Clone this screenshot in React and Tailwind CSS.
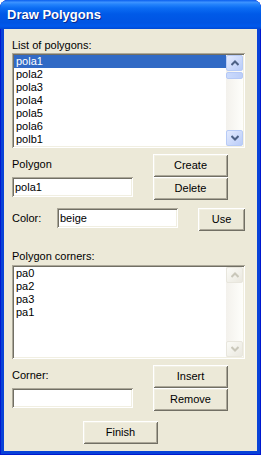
import React from 'react'

const font = { fontFamily: '"Liberation Sans", Arial, sans-serif' }
const sunken = 'shadow-[inset_1px_1px_#ACA899,inset_-1px_-1px_#FFFFFF,inset_2px_2px_#716F64,inset_-2px_-2px_#F1EFE2]'
const raised = 'shadow-[inset_1px_1px_#FFFFFF,inset_-1px_-1px_#716F64,inset_2px_2px_#F1EFE2,inset_-2px_-2px_#ACA899]'

function Button({ children, className = '' }) {
  return (
    <div className={`flex items-center justify-center bg-[#ECE9D8] text-[11px] text-black ${raised} ${className}`}>
      {children}
    </div>
  )
}

function TextBox({ value, className = '' }) {
  return (
    <div className={`flex items-center bg-white pl-[3px] text-[11px] leading-[13px] text-black ${sunken} ${className}`}>
      {value}
    </div>
  )
}

function Arrow({ up, disabled }) {
  const color = disabled ? '#C9C7BA' : '#4D6185'
  return (
    <div
      className={`h-[16px] w-[17px] rounded-[2px] border flex items-center justify-center ${
        disabled
          ? 'border-[#E8E6DD] bg-[linear-gradient(135deg,#FBFBF7,#EAE8DF)]'
          : 'border-[#B7CBF6] bg-[linear-gradient(135deg,#E4EBFE,#B9CCF8)]'
      }`}
    >
      <svg width="8" height="6" viewBox="0 0 8 6">
        <path
          d={up ? 'M0.5 5 L4 1.5 L7.5 5' : 'M0.5 1 L4 4.5 L7.5 1'}
          fill="none"
          stroke={color}
          strokeWidth="2"
        />
      </svg>
    </div>
  )
}

function ScrollBar({ disabled, thumb }) {
  return (
    <div className="flex w-[17px] flex-col bg-[linear-gradient(to_right,#F3F1EC,#FEFEFB)]">
      <Arrow up disabled={disabled} />
      <div className="flex-1">
        {thumb && (
          <div className="mt-[1px] h-[7px] rounded-[2px] border border-[#B4C8F6] bg-[linear-gradient(to_right,#CADAFC,#BCCEF8)]" />
        )}
      </div>
      <Arrow disabled={disabled} />
    </div>
  )
}

function ListBox({ items, selected, disabled, thumb, className = '' }) {
  return (
    <div className={`flex bg-white p-[2px] ${sunken} ${className}`}>
      <div className="flex-1">
        {items.map((it, i) => (
          <div
            key={it}
            className={`h-[13px] pl-[2px] text-[11px] leading-[13px] ${
              i === selected ? 'bg-[#316AC5] text-white' : 'text-black'
            }`}
          >
            {it}
          </div>
        ))}
      </div>
      <ScrollBar disabled={disabled} thumb={thumb} />
    </div>
  )
}

function Label({ children, className = '' }) {
  return <div className={`h-[13px] text-[11px] leading-[13px] text-black ${className}`}>{children}</div>
}

export default function App() {
  return (
    <div style={font} className="h-[455px] w-[261px] bg-white">
      <div className="flex h-full flex-col rounded-t-[8px] bg-[#0842D8] shadow-[inset_1px_0_#0019CF,inset_-1px_0_#0019CF,inset_0_-1px_#0019CF]">
        <div className="flex h-[29px] items-center rounded-t-[8px] bg-[linear-gradient(180deg,#0A5EEE_0%,#3D93FF_8%,#2483FB_15%,#0B6CF3_28%,#005AE8_48%,#0054E3_78%,#0059EC_90%,#0048D4_100%)] pl-[7px]">
          <span className="text-[13px] font-bold text-white [text-shadow:1px_1px_#0B2A8F]">Draw Polygons</span>
        </div>
        <div className="mx-[4px] mb-[4px] flex flex-1 flex-col bg-[#ECE9D8] pl-[8px]">
          <Label className="mt-[10px]">List of polygons:</Label>
          <ListBox
            className="mt-[1px] h-[95px] w-[233px]"
            items={['pola1', 'pola2', 'pola3', 'pola4', 'pola5', 'pola6', 'polb1']}
            selected={0}
            thumb
          />

          <div className="mt-[6px] flex gap-[20px]">
            <div className="flex w-[121px] flex-col">
              <Label className="mt-[4px]">Polygon</Label>
              <TextBox className="mt-[6px] h-[20px]" value="pola1" />
            </div>
            <div className="flex flex-col">
              <Button className="h-[23px] w-[75px]">Create</Button>
              <Button className="h-[23px] w-[75px]">Delete</Button>
            </div>
          </div>

          <div className="mt-[8px] flex items-start">
            <div className="flex h-[20px] w-[45px] items-center text-[11px] text-black">Color:</div>
            <TextBox className="h-[20px] w-[121px]" value="beige" />
            <Button className="ml-[20px] h-[23px] w-[47px]">Use</Button>
          </div>

          <Label className="mt-[19px]">Polygon corners:</Label>
          <ListBox
            className="mt-[2px] h-[94px] w-[233px]"
            items={['pa0', 'pa2', 'pa3', 'pa1']}
            selected={-1}
            disabled
          />

          <div className="mt-[6px] flex gap-[20px]">
            <div className="flex w-[121px] flex-col">
              <Label className="mt-[4px]">Corner:</Label>
              <TextBox className="mt-[6px] h-[20px]" value="" />
            </div>
            <div className="flex flex-col">
              <Button className="h-[23px] w-[75px]">Insert</Button>
              <Button className="h-[23px] w-[75px]">Remove</Button>
            </div>
          </div>

          <Button className="ml-[71px] mt-[10px] h-[23px] w-[75px]">Finish</Button>
        </div>
      </div>
    </div>
  )
}
